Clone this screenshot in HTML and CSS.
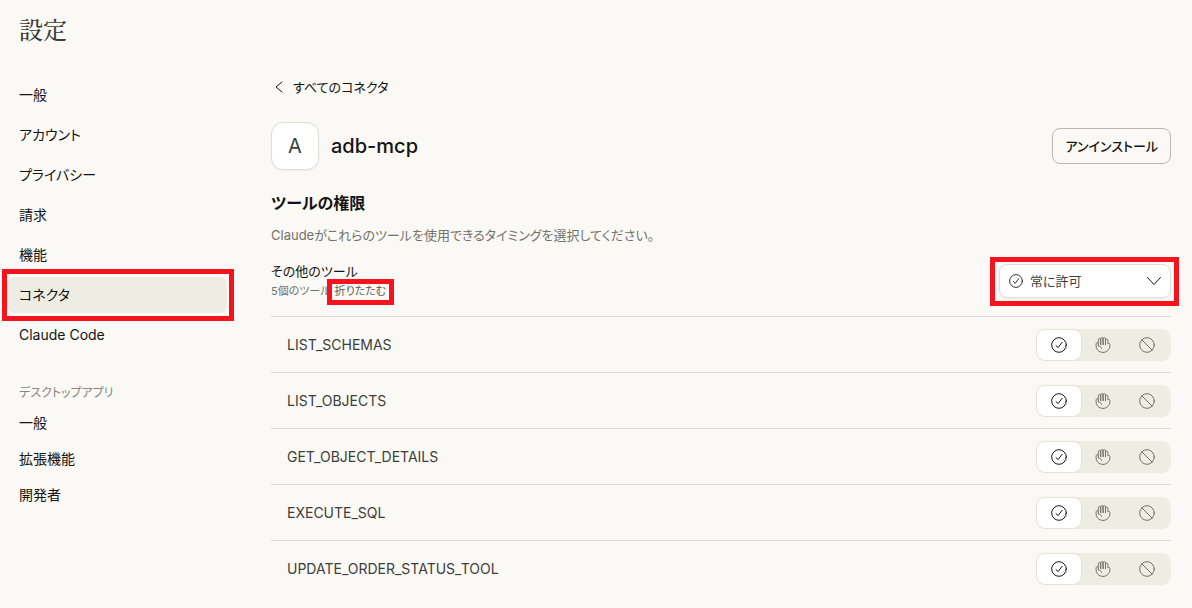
FILE: index.html
```
<!DOCTYPE html>
<html lang="ja">
<head>
    <meta charset="utf-8">
    <title>設定</title>
    <link rel="stylesheet" href="styles.css">
</head>
<body>
    <svg class="sprite" width="0" height="0">
        <symbol id="check" viewBox="0 0 16 16">
            <circle cx="8" cy="8" r="7.3"/>
            <path d="M5 8.6l2.1 2L11 5.4"/>
        </symbol>
        <symbol id="hand" viewBox="0 0 16 16">
            <path d="M5.7 7.5V2.7a1.2 1.2 0 0 0-2.4 0v6M5.7 7.5V1.8a1.2 1.2 0 0 1 2.4 0v5.7M8.1 7.5V1.8a1.2 1.2 0 0 1 2.4 0v5.7M10.5 7.5V3.3a1.2 1.2 0 0 1 2.4 0v3.4c1-.9 2-.2 2 .9v1.1c0 3.8-2.9 6.7-6.9 6.7S1.1 12.5 1.1 8.7V6.9c0-1.2 1.2-1.7 2.2-.9M3.3 8.7c1.7.3 2.9 1.2 3.3 2.7"/>
        </symbol>
        <symbol id="block" viewBox="0 0 16 16">
            <circle cx="8" cy="8" r="7.3"/>
            <path d="M2.9 2.9l10.2 10.2"/>
        </symbol>
    </svg>
    <header class="page-header">
        <h1>設定</h1>
    </header>
    <div class="layout">
        <nav class="sidebar">
            <ul class="nav-list">
                <li><a href="#">一般</a></li>
                <li><a href="#">アカウント</a></li>
                <li><a href="#">プライバシー</a></li>
                <li><a href="#">請求</a></li>
                <li><a href="#">機能</a></li>
                <li><a href="#" class="active marked">コネクタ</a></li>
                <li><a href="#">Claude Code</a></li>
            </ul>
            <h2 class="nav-title">デスクトップアプリ</h2>
            <ul class="nav-list compact">
                <li><a href="#">一般</a></li>
                <li><a href="#">拡張機能</a></li>
                <li><a href="#">開発者</a></li>
            </ul>
        </nav>
        <main class="content">
            <a href="#" class="back">
                <svg class="icon" viewBox="0 0 16 16"><path d="M11 3L5 8l6 5"/></svg>
                すべてのコネクタ
            </a>
            <div class="connector">
                <div class="avatar">A</div>
                <h2 class="connector-name">adb-mcp</h2>
                <button type="button" class="uninstall">アンインストール</button>
            </div>
            <h3 class="section-title">ツールの権限</h3>
            <p class="description">Claudeがこれらのツールを使用できるタイミングを選択してください。</p>
            <div class="group">
                <div class="group-text">
                    <label for="permission" class="group-name">その他のツール</label>
                    <div class="group-info">
                        <span>5個のツール</span>
                        <button type="button" class="collapse marked">折りたたむ</button>
                    </div>
                </div>
                <div class="select-box marked">
                    <svg class="select-icon" viewBox="0 0 16 16"><use href="#check"/></svg>
                    <select id="permission">
                        <option>常に許可</option>
                    </select>
                    <svg class="select-arrow" viewBox="0 0 16 16"><path d="M1.5 4.5L8 11.5l6.5-7"/></svg>
                </div>
            </div>
            <ul class="tools">
                <li class="tool">
                    <span>LIST_SCHEMAS</span>
                    <div class="segment">
                        <label><input type="radio" name="t1" aria-label="常に許可" checked><svg class="icon"><use href="#check"/></svg></label>
                        <label><input type="radio" name="t1" aria-label="確認"><svg class="icon"><use href="#hand"/></svg></label>
                        <label><input type="radio" name="t1" aria-label="ブロック"><svg class="icon"><use href="#block"/></svg></label>
                    </div>
                </li>
                <li class="tool">
                    <span>LIST_OBJECTS</span>
                    <div class="segment">
                        <label><input type="radio" name="t2" aria-label="常に許可" checked><svg class="icon"><use href="#check"/></svg></label>
                        <label><input type="radio" name="t2" aria-label="確認"><svg class="icon"><use href="#hand"/></svg></label>
                        <label><input type="radio" name="t2" aria-label="ブロック"><svg class="icon"><use href="#block"/></svg></label>
                    </div>
                </li>
                <li class="tool">
                    <span>GET_OBJECT_DETAILS</span>
                    <div class="segment">
                        <label><input type="radio" name="t3" aria-label="常に許可" checked><svg class="icon"><use href="#check"/></svg></label>
                        <label><input type="radio" name="t3" aria-label="確認"><svg class="icon"><use href="#hand"/></svg></label>
                        <label><input type="radio" name="t3" aria-label="ブロック"><svg class="icon"><use href="#block"/></svg></label>
                    </div>
                </li>
                <li class="tool">
                    <span>EXECUTE_SQL</span>
                    <div class="segment">
                        <label><input type="radio" name="t4" aria-label="常に許可" checked><svg class="icon"><use href="#check"/></svg></label>
                        <label><input type="radio" name="t4" aria-label="確認"><svg class="icon"><use href="#hand"/></svg></label>
                        <label><input type="radio" name="t4" aria-label="ブロック"><svg class="icon"><use href="#block"/></svg></label>
                    </div>
                </li>
                <li class="tool">
                    <span>UPDATE_ORDER_STATUS_TOOL</span>
                    <div class="segment">
                        <label><input type="radio" name="t5" aria-label="常に許可" checked><svg class="icon"><use href="#check"/></svg></label>
                        <label><input type="radio" name="t5" aria-label="確認"><svg class="icon"><use href="#hand"/></svg></label>
                        <label><input type="radio" name="t5" aria-label="ブロック"><svg class="icon"><use href="#block"/></svg></label>
                    </div>
                </li>
            </ul>
        </main>
    </div>
</body>
</html>
```
FILE: styles.css
```
* {
    box-sizing: border-box;
}
body {
    margin: 0;
    background-color: #FAF9F5;
    color: #141413;
    font-family: Inter, "Noto Sans CJK JP", sans-serif;
    font-size: 14px;
    line-height: 20px;
    font-feature-settings: "palt";
}
h1, h2, h3, p, ul {
    margin: 0;
    padding: 0;
}
ul {
    list-style: none;
}
a {
    color: inherit;
    text-decoration: none;
}
button, select {
    font: inherit;
    font-feature-settings: inherit;
    color: inherit;
}
svg {
    fill: none;
    stroke: currentColor;
    stroke-linecap: round;
    stroke-linejoin: round;
}
.sprite {
    position: absolute;
}
.icon {
    width: 16px;
    height: 16px;
    flex: none;
}
.page-header {
    padding: 13px 19px;
}
.page-header h1 {
    font-family: "Noto Serif CJK JP", "Noto Sans CJK JP", serif;
    font-size: 24px;
    font-weight: 500;
    line-height: 32px;
    color: #3D3D3A;
}
.layout {
    display: flex;
    gap: 44px;
    padding: 19px 21px 0 7px;
}
.sidebar {
    width: 220px;
    flex: none;
}
.nav-list {
    display: flex;
    flex-direction: column;
    gap: 4px;
}
.nav-list a {
    display: block;
    padding: 8px 12px;
    border-radius: 8px;
}
.nav-list .active {
    background-color: #EEEDE4;
}
.nav-title {
    padding: 0 12px;
    margin-top: 30px;
    font-size: 12px;
    font-weight: 400;
    color: #87867F;
}
.compact {
    gap: 0;
    margin-top: 2px;
}

/* red callout frames */
.marked {
    position: relative;
}
.marked::after {
    content: "";
    position: absolute;
    border: 5px solid #F5141E;
    pointer-events: none;
}
.active::after {
    inset: -8px -7px -8px -5px;
}
.collapse::after {
    inset: -4px -8px -6px -8px;
}
.select-box::after {
    inset: -7px -8px -8px -9px;
}

.content {
    flex: 1;
    min-width: 0;
}
.back {
    display: flex;
    align-items: center;
    gap: 6px;
    font-size: 13px;
}
.connector {
    display: flex;
    align-items: center;
    gap: 12px;
    margin-top: 25px;
}
.avatar {
    width: 48px;
    height: 48px;
    border: 1px solid #DEDDD7;
    border-radius: 12px;
    background-color: #FFFFFF;
    box-shadow: 0 1px 2px rgba(0, 0, 0, 0.05);
    font-size: 20px;
    line-height: 46px;
    text-align: center;
    color: #3D3D3A;
}
.connector-name {
    font-size: 20px;
    font-weight: 500;
}
.uninstall {
    height: 36px;
    margin-left: auto;
    padding: 0 12px;
    border: 1px solid #B9B8B2;
    border-radius: 8px;
    background-color: transparent;
    font-size: 13px;
    font-weight: 500;
}
.section-title {
    margin-top: 21px;
    font-size: 16px;
    font-weight: 600;
    line-height: 24px;
}
.description {
    margin-top: 10px;
    font-size: 13px;
    color: #73726C;
}
.group {
    display: flex;
    align-items: center;
    justify-content: space-between;
    height: 71px;
}
.group-name {
    display: block;
    font-size: 13px;
}
.group-info {
    display: flex;
    gap: 4px;
    font-size: 11px;
    color: #73726C;
}
.collapse {
    padding: 0;
    border: 0;
    background: none;
    line-height: 16px;
    height: 16px;
    margin-top: 2px;
    color: #5E5D59;
}
.select-box {
    width: 172px;
    height: 34px;
}
.select-box select {
    appearance: none;
    width: 100%;
    height: 100%;
    padding: 0 30px;
    border: 1px solid #DEDDD7;
    border-radius: 8px;
    background-color: #FFFFFF;
    box-shadow: 0 1px 2px rgba(0, 0, 0, 0.05);
    font-size: 13px;
    color: #3D3D3A;
}
.select-icon {
    position: absolute;
    top: 10px;
    left: 10px;
    width: 14px;
    height: 14px;
}
.select-arrow {
    position: absolute;
    top: 9px;
    right: 9px;
    width: 16px;
    height: 16px;
}
.tool {
    display: flex;
    align-items: center;
    justify-content: space-between;
    height: 56px;
    padding-left: 16px;
    border-top: 1px solid #D9D8D3;
    color: #3D3D3A;
}
.segment {
    display: flex;
    padding: 1px 2px 1px 1px;
    border-radius: 9px;
    background-color: #EEEDE4;
}
.segment label {
    display: flex;
    align-items: center;
    justify-content: center;
    width: 44px;
    height: 30px;
    border-radius: 8px;
    color: #73726C;
}
.segment label:has(input:checked) {
    background-color: #FFFFFF;
    box-shadow: 0 0 2px rgba(0, 0, 0, 0.15);
    color: #141413;
}
.segment input {
    appearance: none;
    width: 0;
    height: 0;
    margin: 0;
}
```
